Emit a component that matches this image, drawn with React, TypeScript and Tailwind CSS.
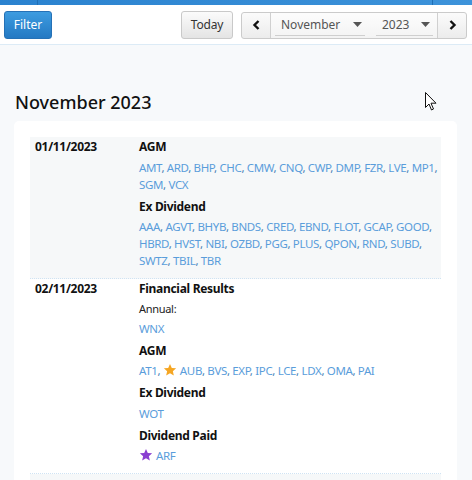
import React from "react";

const font = { fontFamily: '"Noto Sans", "Open Sans", sans-serif' };

function Tickers({ items }: { items: (string | { t: string; star: "gold" | "purple" })[] }) {
  return (
    <div className="text-[11.5px] leading-[17px] tracking-[-0.35px] text-[#5a9ddb]">
      {items.map((it, i) => {
        const last = i === items.length - 1;
        if (typeof it === "string")
          return (
            <span key={i}>
              {it}
              {!last && <span className="text-[#4a7fb5]">, </span>}
            </span>
          );
        return (
          <span key={i} className="whitespace-nowrap">
            <svg width="14" height="14" viewBox="0 0 24 24" className="inline-block align-[-2px] mr-[3px]">
              <path
                d="M12 1.5l3.1 6.9 7.4.7-5.6 5 1.7 7.4L12 17.6l-6.6 3.9 1.7-7.4-5.6-5 7.4-.7z"
                fill={it.star === "gold" ? "#f5a623" : "#8a3fd1"}
              />
            </svg>
            {it.t}
            {!last && <span className="text-[#4a7fb5]">, </span>}
          </span>
        );
      })}
    </div>
  );
}

function Group({ title, children }: { title: string; children: React.ReactNode }) {
  return (
    <div className="mb-[5px]">
      <div className="text-[12px] font-bold leading-[18px] tracking-[-0.3px] text-[#111] mb-[2.5px]">{title}</div>
      {children}
    </div>
  );
}

export default function App() {
  return (
    <div className="w-[472px] h-[480px] overflow-hidden bg-[#f7f9fb] relative" style={font}>
      <div className="h-[5px] bg-gradient-to-r from-[#2a82cf] to-[#3d93da] flex">
        <div className="w-[38px] border-r border-[#1f6fb5]" />
        <div className="w-[395px] border-r border-[#1f6fb5]" />
      </div>
      <div className="h-[40px] bg-white border-b border-[#dcebf6] flex items-center px-[4px] pt-[1px]">
        <button className="h-[28px] w-[48px] rounded-[3px] border border-[#2571b6] bg-gradient-to-b from-[#3d9ce0] to-[#2479c3] text-white text-[12px]">
          Filter
        </button>
        <div className="flex-1" />
        <button className="h-[28px] w-[52px] rounded-[3px] border border-[#c9c9c9] bg-gradient-to-b from-[#fbfbfb] to-[#e4e4e4] text-[#333] text-[12px] tracking-[-0.2px]">
          Today
        </button>
        <div className="ml-[8px] mr-[1px] h-[27px] w-[226px] flex rounded-[3px] border border-[#cbcbcb] bg-gradient-to-b from-[#fbfbfb] to-[#ececec]">
          <div className="w-[33px] border-r border-[#d0d0d0] flex items-center justify-center">
            <svg width="9" height="10" viewBox="0 0 9 10">
              <path d="M6.5 1L2.5 5l4 4" stroke="#111" strokeWidth="2.4" fill="none" />
            </svg>
          </div>
          <div className="flex-1 flex items-center px-[4px] gap-[11px] bg-white/40">
            <div className="w-[90px] h-[22px] border-b border-[#cfcfcf] flex items-center justify-between pl-[6px] pr-[3px] text-[12px] text-[#555]">
              <span>November</span>
              <svg width="9" height="5" viewBox="0 0 9 5"><path d="M0 0h9L4.5 5z" fill="#555" /></svg>
            </div>
            <div className="w-[57px] h-[22px] border-b border-[#cfcfcf] flex items-center justify-between pl-[6px] pr-[3px] text-[12px] text-[#555]">
              <span>2023</span>
              <svg width="9" height="5" viewBox="0 0 9 5"><path d="M0 0h9L4.5 5z" fill="#555" /></svg>
            </div>
          </div>
          <div className="w-[33px] border-l border-[#d0d0d0] flex items-center justify-center">
            <svg width="9" height="10" viewBox="0 0 9 10">
              <path d="M2.5 1l4 4-4 4" stroke="#111" strokeWidth="2.4" fill="none" />
            </svg>
          </div>
        </div>
      </div>

      <div className="px-[14px] pt-[45px]">
        <h1 className="text-[18px] font-medium leading-[24px] text-[#111] mb-[7px] pl-[1px]">November 2023</h1>
        <div className="bg-white rounded-[5px] w-[443px] px-[16px] pt-[16px]">
          <div className="bg-[#f6f8f9] border-b border-dotted border-[#cfe3f3] flex pt-[1px] pb-[4px]">
            <div className="w-[109px] pl-[5px] text-[12px] font-bold leading-[18px] tracking-[-0.3px] text-[#111]">01/11/2023</div>
            <div className="flex-1">
              <Group title="AGM">
                <Tickers items={["AMT", "ARD", "BHP", "CHC", "CMW", "CNQ", "CWP", "DMP", "FZR", "LVE", "MP1", "SGM", "VCX"]} />
              </Group>
              <Group title="Ex Dividend">
                <Tickers
                  items={["AAA", "AGVT", "BHYB", "BNDS", "CRED", "EBND", "FLOT", "GCAP", "GOOD", "HBRD", "HVST", "NBI", "OZBD", "PGG", "PLUS", "QPON", "RND", "SUBD", "SWTZ", "TBIL", "TBR"]}
                />
              </Group>
            </div>
          </div>
          <div className="bg-white border-b border-dotted border-[#cfe3f3] flex pt-[1px] pb-[4px]">
            <div className="w-[109px] pl-[5px] text-[12px] font-bold leading-[18px] tracking-[-0.3px] text-[#111]">02/11/2023</div>
            <div className="flex-1">
              <Group title="Financial Results">
                <div className="text-[11px] leading-[16px] text-[#222] mb-[3px] tracking-[-0.3px]">Annual:</div>
                <Tickers items={["WNX"]} />
              </Group>
              <Group title="AGM">
                <Tickers items={["AT1", { t: "AUB", star: "gold" }, "BVS", "EXP", "IPC", "LCE", "LDX", "OMA", "PAI"]} />
              </Group>
              <Group title="Ex Dividend">
                <Tickers items={["WOT"]} />
              </Group>
              <Group title="Dividend Paid">
                <Tickers items={[{ t: "ARF", star: "purple" }]} />
              </Group>
            </div>
          </div>
          <div className="bg-[#f6f8f9] h-[40px]" />
        </div>
      </div>

      <svg className="absolute left-[425px] top-[92px]" width="12" height="19" viewBox="0 0 12 19">
        <path d="M0.5 0.5v15l3.5-3.5 2.5 6 2-1-2.5-5.8h5z" fill="#fff" stroke="#111" strokeWidth="1" />
      </svg>
    </div>
  );
}
